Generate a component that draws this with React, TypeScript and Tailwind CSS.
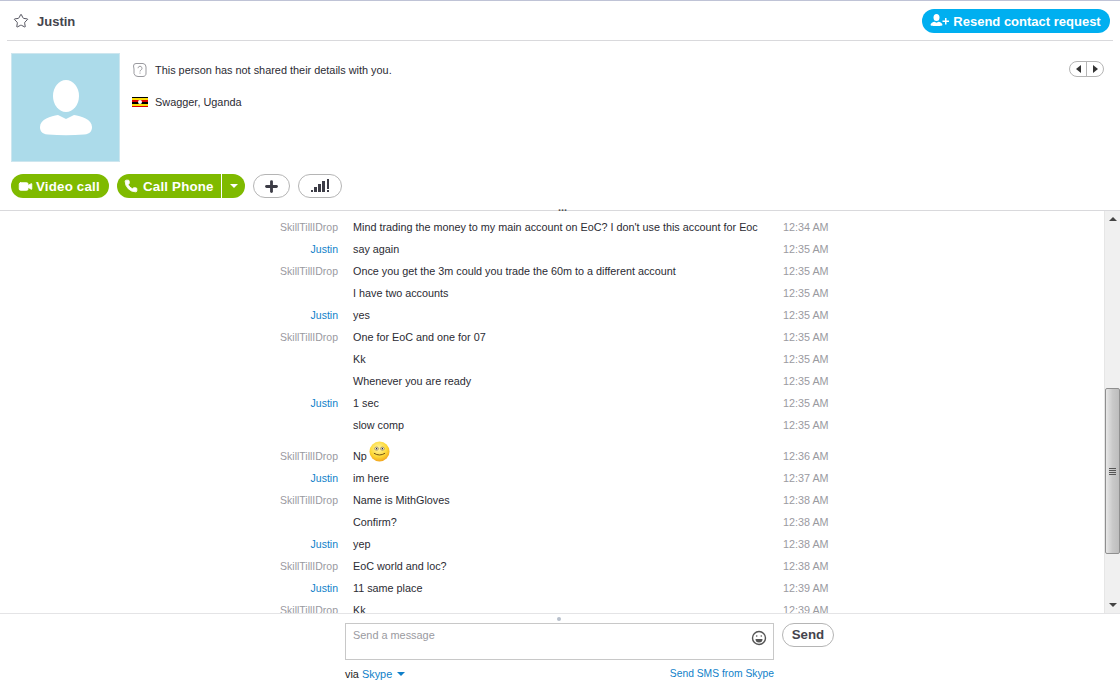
import React from 'react';
import { Star, Video, Phone, Plus } from 'lucide-react';

type Msg = { who?: 'S' | 'J'; text: string; time: string; smile?: boolean };

const messages: Msg[] = [
  { who: 'S', text: "Mind trading the money to my main account on EoC? I don't use this account for Eoc", time: '12:34 AM' },
  { who: 'J', text: 'say again', time: '12:35 AM' },
  { who: 'S', text: 'Once you get the 3m could you trade the 60m to a different account', time: '12:35 AM' },
  { text: 'I have two accounts', time: '12:35 AM' },
  { who: 'J', text: 'yes', time: '12:35 AM' },
  { who: 'S', text: 'One for EoC and one for 07', time: '12:35 AM' },
  { text: 'Kk', time: '12:35 AM' },
  { text: 'Whenever you are ready', time: '12:35 AM' },
  { who: 'J', text: '1 sec', time: '12:35 AM' },
  { text: 'slow comp', time: '12:35 AM' },
  { who: 'S', text: 'Np', time: '12:36 AM', smile: true },
  { who: 'J', text: 'im here', time: '12:37 AM' },
  { who: 'S', text: 'Name is MithGloves', time: '12:38 AM' },
  { text: 'Confirm?', time: '12:38 AM' },
  { who: 'J', text: 'yep', time: '12:38 AM' },
  { who: 'S', text: 'EoC world and loc?', time: '12:38 AM' },
  { who: 'J', text: '11 same place', time: '12:39 AM' },
  { who: 'S', text: 'Kk', time: '12:39 AM' },
];

const Smiley = () => (
  <svg width="21" height="21" viewBox="0 0 22 22" className="ml-[2px] mb-[5px]">
    <defs>
      <radialGradient id="sm" cx="45%" cy="35%" r="70%">
        <stop offset="0%" stopColor="#fff6a8" />
        <stop offset="60%" stopColor="#fdd835" />
        <stop offset="100%" stopColor="#f09a1a" />
      </radialGradient>
    </defs>
    <circle cx="11" cy="11" r="10.500" fill="url(#sm)" />
    <ellipse cx="8" cy="8" rx="2" ry="1.600" fill="#fff" stroke="#7a5a20" strokeWidth="0.600" />
    <ellipse cx="14" cy="8" rx="2" ry="1.600" fill="#fff" stroke="#7a5a20" strokeWidth="0.600" />
    <circle cx="8" cy="8" r="0.800" fill="#333" />
    <circle cx="14" cy="8" r="0.800" fill="#333" />
    <path d="M5.500 13 Q11 16.500 16.500 13" fill="none" stroke="#6b4a12" strokeWidth="1" strokeLinecap="round" />
  </svg>
);

const Row = ({ m }: { m: Msg }) => (
  <div className={`flex shrink-0 items-end ${m.smile ? 'h-[31px]' : 'h-[22px]'}`}>
    <div className={`w-[338px] h-[22px] leading-[22px] text-right text-[10.5px] ${m.who === 'J' ? 'text-[#0f7fc9]' : 'text-[#9a9a9f]'}`}>
      {m.who === 'J' ? 'Justin' : m.who === 'S' ? 'SkillTillIDrop' : ''}
    </div>
    <div className="w-[430px] ml-[15px] flex items-end text-[10.8px] text-[#2b2b33]">
      <span className="h-[22px] leading-[22px]">{m.text}</span>
      {m.smile && <Smiley />}
    </div>
    <div className="w-[60px] h-[22px] leading-[22px] text-[10.8px] text-[#9a9a9f]">{m.time}</div>
  </div>
);

const Scrollbar = () => (
  <div className="w-[16px] shrink-0 bg-[#f0f0f0] border-l border-[#e6e6e6] flex flex-col items-center">
    <div className="h-[177px] shrink-0 w-full flex justify-center pt-[6px]">
      <div className="w-0 h-0 border-x-[4px] border-x-transparent border-b-[4px] border-b-[#444]" />
    </div>
    <div className="h-[166px] shrink-0 w-[15px] border border-[#8f8f8f] rounded-[2px] bg-gradient-to-r from-[#e8e8e8] via-[#c9c9c9] to-[#bdbdbd] flex flex-col items-center justify-center gap-[1px]">
      <div className="w-[7px] h-[1px] bg-[#555]" />
      <div className="w-[7px] h-[1px] bg-[#555]" />
      <div className="w-[7px] h-[1px] bg-[#555]" />
      <div className="w-[7px] h-[1px] bg-[#555]" />
    </div>
    <div className="flex-1 w-full flex justify-center items-end pb-[6px]">
      <div className="w-0 h-0 border-x-[4px] border-x-transparent border-t-[4px] border-t-[#444]" />
    </div>
  </div>
);

export default function App() {
  return (
    <div className="w-[1120px] h-[686px] bg-white flex flex-col overflow-hidden font-['Liberation_Sans',sans-serif] text-[10.9px] text-[#2b2b33]">
      <div className="h-[1px] shrink-0 bg-[#bfc3d6]" />

      {/* Header */}
      <div className="h-[40px] shrink-0 mx-[7px] border-b border-[#d9d9dc] flex items-center justify-between">
        <div className="flex items-center">
          <Star className="w-[16px] h-[16px] ml-[6px] text-[#555560]" strokeWidth={1.5} />
          <span className="ml-[8px] pt-[2px] text-[13px] font-bold text-[#44444d]">Justin</span>
        </div>
        <button className="h-[24px] w-[188px] mr-[3px] rounded-full bg-[#00aff0] text-white text-[13px] font-bold flex items-center justify-center gap-[4px] pr-[1px]">
          <svg width="19" height="13" viewBox="0 0 19 13" fill="#fff">
            <ellipse cx="6.500" cy="3.500" rx="3" ry="3.500" />
            <path d="M0.500 11c0-2 2.500-3 4-3.300l2 1 2-1c1.500.3 4 1.300 4 3.300 0 1.400-12 1.400-12 0z" />
            <path d="M15 4h1.500v2.500H19V8h-2.500v2.500H15V8h-2.500V6.500H15z" />
          </svg>
          <span className="pt-[2px]">Resend contact request</span>
        </button>
      </div>

      {/* Profile */}
      <div className="h-[169px] shrink-0 relative">
        <div className="flex pl-[11px] pt-[12px]">
          <div className="w-[109px] h-[109px] bg-[#acdbea] border border-[#cde6ef] flex items-center justify-center">
            <svg width="54" height="56" viewBox="0 0 54 56" fill="#fff">
              <ellipse cx="27" cy="16" rx="13" ry="16" />
              <path d="M1 47c0-8 11-11 18-12l8 4 8-4c7 1 18 4 18 12 0 3-1 7-8 7.500-12 1-24 1-36 0C2 54 1 50 1 47z" />
            </svg>
          </div>
          <div className="ml-[12px] pt-[7px] flex flex-col">
            <div className="flex items-center h-[20px]">
              <svg width="16" height="16" viewBox="0 0 16 16" fill="none" stroke="#9a9a9f" strokeWidth="1">
                <path d="M4 1.500h7a3.500 3.500 0 0 1 3 3.500v6a3 3 0 0 1-3 3.500H6a4 4 0 0 1-4-3V7L1.500 4A2.500 2.500 0 0 1 4 1.500z" />
                <circle cx="8" cy="11" r="0.600" fill="#8a8a8f" stroke="none" />
                <path d="M6 6.200a2 2 0 1 1 3 1.800c-.7.4-1 .8-1 1.500" />
              </svg>
              <span className="ml-[7px]">This person has not shared their details with you.</span>
            </div>
            <div className="flex items-center h-[20px] mt-[12px]">
              <div className="relative w-[16px] h-[11px] flex flex-col">
                <div className="flex-1 bg-black" />
                <div className="flex-1 bg-[#fcdc04]" />
                <div className="flex-1 bg-[#d90000]" />
                <div className="flex-1 bg-black" />
                <div className="flex-1 bg-[#fcdc04]" />
                <div className="flex-1 bg-[#d90000]" />
                <div className="absolute left-[6px] top-[3px] w-[4px] h-[4px] rounded-full bg-white" />
              </div>
              <span className="ml-[7px]">Swagger, Uganda</span>
            </div>
          </div>
        </div>

        <div className="absolute right-[16px] top-[20px] w-[35px] h-[16px] border border-[#b5b5b5] rounded-full flex">
          <div className="flex-1 border-r border-[#b5b5b5] flex items-center justify-center">
            <div className="w-0 h-0 border-y-[4px] border-y-transparent border-r-[5px] border-r-[#333]" />
          </div>
          <div className="flex-1 flex items-center justify-center">
            <div className="w-0 h-0 border-y-[4px] border-y-transparent border-l-[5px] border-l-[#333]" />
          </div>
        </div>

        {/* Call buttons */}
        <div className="flex items-center pl-[11px] mt-[12px] h-[24px] text-[13.3px] font-bold tracking-[0.2px]">
          <button className="w-[98px] h-[24px] rounded-full bg-[#7fba00] text-white flex items-center gap-[2px] pl-[6px]">
            <Video className="w-[17px] h-[15px]" fill="#fff" strokeWidth={1.5} />
            <span className="pt-[2px]">Video call</span>
          </button>
          <div className="ml-[8px] w-[128px] h-[24px] rounded-full bg-[#7fba00] text-white flex">
            <button className="w-[105px] flex items-center gap-[5px] pl-[7px] border-r border-white">
              <Phone className="w-[14px] h-[14px]" fill="#fff" strokeWidth={1.5} />
              <span className="pt-[2px]">Call Phone</span>
            </button>
            <div className="flex-1 flex items-center justify-center">
              <div className="w-0 h-0 border-x-[4px] border-x-transparent border-t-[4px] border-t-white" />
            </div>
          </div>
          <button className="ml-[8px] w-[37px] h-[24px] rounded-full border border-[#b5b5b5] flex items-center justify-center">
            <Plus className="w-[17px] h-[17px] text-[#3c3c46]" strokeWidth={4} />
          </button>
          <button className="ml-[8px] w-[44px] h-[24px] rounded-full border border-[#b5b5b5] flex items-end justify-center pb-[5px] gap-[1px]">
            <div className="w-[2px] h-[2px] bg-[#3c3c46]" />
            <div className="w-[3px] h-[5px] bg-[#3c3c46]" />
            <div className="w-[3px] h-[8px] bg-[#3c3c46]" />
            <div className="w-[3px] h-[11px] bg-[#3c3c46]" />
            <div className="ml-[1px] flex flex-col gap-[1px]">
              <div className="w-[2px] h-[10px] bg-[#3c3c46]" />
              <div className="w-[2px] h-[2px] bg-[#3c3c46]" />
            </div>
          </button>
        </div>

        <div className="absolute left-[558px] bottom-[0px] text-[#555] text-[11px] leading-[6px] font-bold">...</div>
      </div>

      {/* Messages */}
      <div className="h-[404px] shrink-0 border-t border-[#d9d9dc] border-b-[#e4e4e6] border-b flex">
        <div className="flex-1 overflow-hidden flex flex-col pt-[5px]">
          {messages.map((m, i) => (
            <Row key={i} m={m} />
          ))}
        </div>
        <Scrollbar />
      </div>

      {/* Compose */}
      <div className="flex-1 relative pl-[345px]">
        <div className="absolute left-[557px] top-[3px] w-[4px] h-[4px] rounded-full bg-[#b8c0cc]" />
        <div className="flex pt-[9px]">
          <div className="w-[429px] h-[37px] border border-[#c8c8c8] flex justify-between">
            <span className="pl-[7px] pt-[3px] leading-[16px] text-[#9a9a9f]">Send a message</span>
            <svg width="16" height="16" viewBox="0 0 16 16" className="mt-[6px] mr-[6px]" fill="none" stroke="#555" strokeWidth="1.400">
              <circle cx="8" cy="8" r="6.500" />
              <circle cx="5.700" cy="6" r="0.800" fill="#555" stroke="none" />
              <circle cx="10.300" cy="6" r="0.800" fill="#555" stroke="none" />
              <path d="M4.500 9h7a3.500 3.500 0 0 1-7 0z" fill="#555" stroke="none" />
            </svg>
          </div>
          <button className="ml-[8px] w-[52px] h-[24px] rounded-full border border-[#b5b5b5] text-[13.3px] font-bold text-[#44444d]">Send</button>
        </div>
        <div className="w-[429px] flex justify-between mt-[6px] h-[16px] leading-[16px]">
          <div className="flex items-center">
            <span className="text-[#222]">via</span>
            <span className="ml-[3px] text-[#0f7fc9]">Skype</span>
            <div className="ml-[5px] w-0 h-0 border-x-[4px] border-x-transparent border-t-[4px] border-t-[#0f7fc9]" />
          </div>
          <span className="text-[10.3px] text-[#0f7fc9]">Send SMS from Skype</span>
        </div>
      </div>
    </div>
  );
}
